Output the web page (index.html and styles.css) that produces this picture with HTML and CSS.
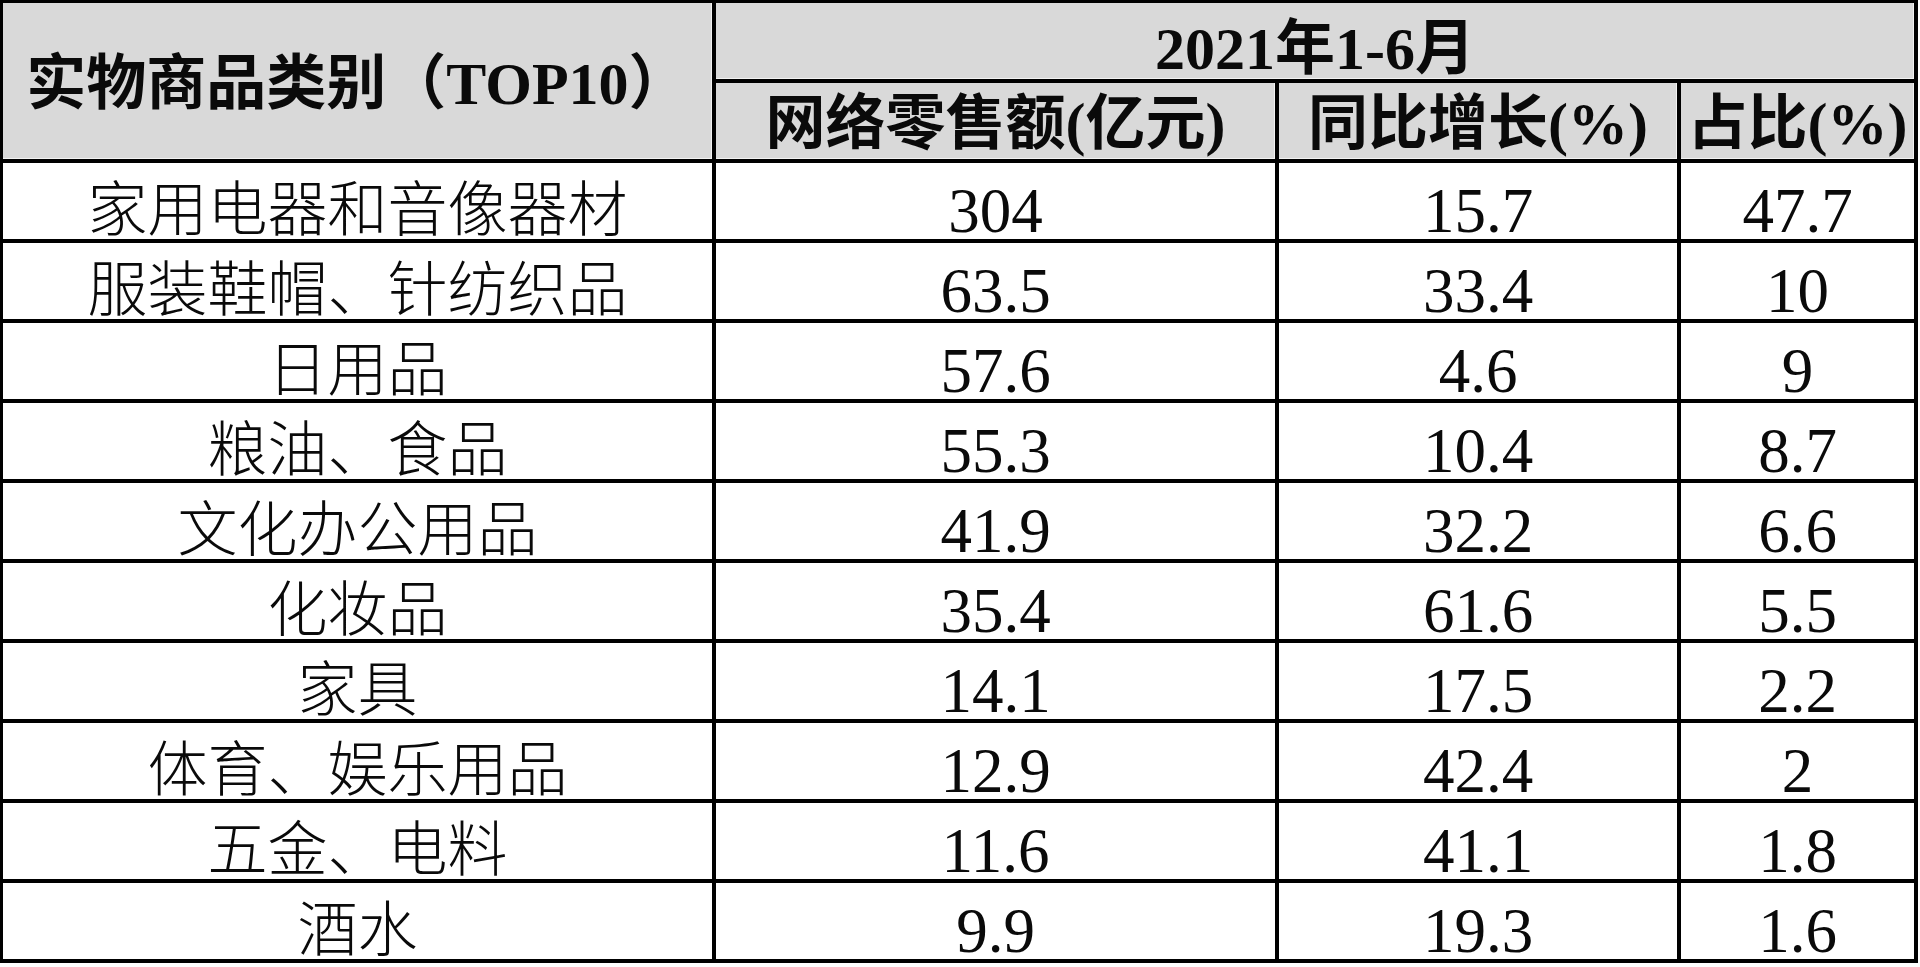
FILE: index.html
```html
<!DOCTYPE html>
<html lang="zh-CN">
<head>
<meta charset="utf-8">
<title>实物商品类别（TOP10）</title>
<link rel="stylesheet" href="styles.css">
</head>
<body>
<table class="sheet">
  <colgroup>
    <col class="c1">
    <col class="c2">
    <col class="c3">
    <col class="c4">
  </colgroup>
  <thead>
    <tr class="h1">
      <th rowspan="2" class="cat-head">实物商品类别（TOP10）</th>
      <th colspan="3" class="period">2021年1-6月</th>
    </tr>
    <tr class="h2">
      <th>网络零售额(亿元)</th>
      <th>同比增长(%)</th>
      <th>占比(%)</th>
    </tr>
  </thead>
  <tbody>
    <tr><td>家用电器和音像器材</td><td class="num">304</td><td class="num">15.7</td><td class="num">47.7</td></tr>
    <tr><td>服装鞋帽、针纺织品</td><td class="num">63.5</td><td class="num">33.4</td><td class="num">10</td></tr>
    <tr><td>日用品</td><td class="num">57.6</td><td class="num">4.6</td><td class="num">9</td></tr>
    <tr><td>粮油、食品</td><td class="num">55.3</td><td class="num">10.4</td><td class="num">8.7</td></tr>
    <tr><td>文化办公用品</td><td class="num">41.9</td><td class="num">32.2</td><td class="num">6.6</td></tr>
    <tr><td>化妆品</td><td class="num">35.4</td><td class="num">61.6</td><td class="num">5.5</td></tr>
    <tr><td>家具</td><td class="num">14.1</td><td class="num">17.5</td><td class="num">2.2</td></tr>
    <tr><td>体育、娱乐用品</td><td class="num">12.9</td><td class="num">42.4</td><td class="num">2</td></tr>
    <tr><td>五金、电料</td><td class="num">11.6</td><td class="num">41.1</td><td class="num">1.8</td></tr>
    <tr><td>酒水</td><td class="num">9.9</td><td class="num">19.3</td><td class="num">1.6</td></tr>
  </tbody>
</table>
</body>
</html>
```
FILE: styles.css
```css
html, body {
  margin: 0;
  padding: 0;
  background: #ffffff;
}

.sheet {
  border-collapse: separate;
  border-spacing: 0;
  table-layout: fixed;
  width: 1918px;
  border-top: 3px solid #000;
  border-left: 3px solid #000;
  font-family: "Liberation Serif", "Noto Sans CJK SC", serif;
  color: #0a0a0a;
}

.c1 { width: 713px; }
.c2 { width: 563px; }
.c3 { width: 402px; }
.c4 { width: 237px; }

.sheet th,
.sheet td {
  border-right: 4px solid #000;
  border-bottom: 4px solid #000;
  padding: 0;
  text-align: center;
  vertical-align: middle;
  font-size: 60px;
  line-height: 50px;
  white-space: nowrap;
}

.sheet th {
  background: #d9d9d9;
  font-weight: 700;
  box-shadow: inset -1px -1px 0 #f2f2f2;
  padding-top: 6px;
}

.sheet th.period {
  padding-top: 16px;
}

.sheet td {
  font-weight: 300;
  background: #fff;
  padding-top: 20px;
}

.sheet td.num {
  font-size: 63px;
}

.h1 { height: 80px; }
.h2 { height: 80px; }
.sheet tbody tr { height: 80px; }

.cat-head {
  text-align: left;
  padding-left: 24px;
  padding-top: 20px;
}
```
